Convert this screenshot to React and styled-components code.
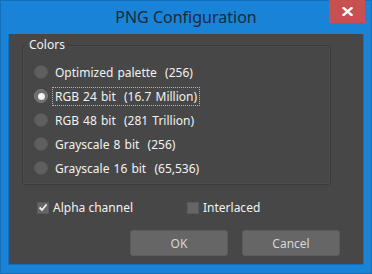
import React from "react";
import styled, { createGlobalStyle } from "styled-components";

const Global = createGlobalStyle`
  html, body { margin: 0; padding: 0; background: #1883d7; }
  body { font-family: "Noto Sans", "Open Sans", sans-serif; }
`;

const Window = styled.div`
  box-sizing: border-box;
  width: 372px;
  height: 274px;
  background: #1883d7;
  border: 1px solid #136fba;
  display: flex;
  flex-direction: column;
  padding: 0 7px 8px 7px;
`;

const TitleBar = styled.div`
  position: relative;
  height: 33px;
  display: flex;
  align-items: center;
  justify-content: center;
  flex-shrink: 0;
`;

const Title = styled.div`
  font-family: "Noto Sans", sans-serif;
  font-size: 16px;
  color: #1e2a36;
  margin-top: -1px;
`;

const CloseButton = styled.button`
  position: absolute;
  top: -1px;
  right: -1px;
  width: 36px;
  height: 23px;
  border: none;
  padding: 0;
  background: #c75050;
  display: flex;
  align-items: center;
  justify-content: center;
`;

const Content = styled.div`
  flex: 1;
  background: #474747;
  border: 1px solid #1670bf;
  border-top: none;
  display: flex;
  flex-direction: column;
  padding: 11px 0 0 0;
  color: #f2f2f2;
  font-size: 12px;
`;

const Group = styled.div`
  position: relative;
  margin: 0 32px 0 13px;
  border: 1px solid #3a3a3a;
  border-radius: 3px;
  box-shadow: inset 0 0 0 1px #4c4c4c;
  padding: 14px 0 4px 11px;
  display: flex;
  flex-direction: column;
`;

const Legend = styled.span`
  position: absolute;
  top: -9px;
  left: 3px;
  padding: 0 3px;
  background: #474747;
  line-height: 15px;
  color: #f2f2f2;
`;

const RadioRow = styled.div`
  height: 24px;
  display: flex;
  align-items: center;
`;

const RadioCircle = styled.span`
  box-sizing: border-box;
  width: 14px;
  height: 14px;
  border-radius: 50%;
  margin-right: 4px;
  flex-shrink: 0;
  background: ${(p) => (p.$checked ? "#6e6e6e" : "#5f5f5f")};
  border: 1px solid ${(p) => (p.$checked ? "#7a7a7a" : "#585858")};
  display: flex;
  align-items: center;
  justify-content: center;
  &::after {
    content: "";
    display: ${(p) => (p.$checked ? "block" : "none")};
    width: 7px;
    height: 7px;
    border-radius: 50%;
    background: radial-gradient(circle at 40% 40%, #ffffff, #dcdcdc);
  }
`;

const RadioLabel = styled.span`
  white-space: pre;
  word-spacing: 1px;
  line-height: 15px;
  padding: 1px 2px;
  border: 1px dotted ${(p) => (p.$focused ? "#b5b5b5" : "transparent")};
`;

const CheckRow = styled.div`
  display: grid;
  grid-template-columns: 150px auto;
  padding-left: 28px;
  margin-top: 15px;
  height: 13px;
  align-items: center;
`;

const CheckItem = styled.div`
  display: flex;
  align-items: center;
  gap: 4px;
  line-height: 15px;
`;

const CheckBox = styled.span`
  box-sizing: border-box;
  width: 12px;
  height: 12px;
  background: #666666;
  border: 1px solid #5a5a5a;
  display: flex;
  align-items: center;
  justify-content: center;
`;

const ButtonRow = styled.div`
  display: flex;
  justify-content: flex-end;
  gap: 14px;
  padding-right: 23px;
  margin-top: 17px;
`;

const Button = styled.button`
  box-sizing: border-box;
  width: 98px;
  height: 26px;
  border-radius: 3px;
  border: 1px solid #5c5c5c;
  background: #666666;
  color: #d6d6d6;
  font-family: "Noto Sans", sans-serif;
  font-size: 12px;
  padding: 0;
`;

const options = [
  "Optimized palette  (256)",
  "RGB 24 bit  (16.7 Million)",
  "RGB 48 bit  (281 Trillion)",
  "Grayscale 8 bit  (256)",
  "Grayscale 16 bit  (65,536)",
];

export default function App() {
  return (
    <>
      <Global />
      <Window>
        <TitleBar>
          <Title>PNG Configuration</Title>
          <CloseButton aria-label="Close">
            <svg width="11" height="9" viewBox="0 0 11 9">
              <path d="M1.5 1 L9.5 8 M9.5 1 L1.5 8" stroke="#fff" strokeWidth="2.4" strokeLinecap="square" />
            </svg>
          </CloseButton>
        </TitleBar>
        <Content>
          <Group>
            <Legend>Colors</Legend>
            {options.map((o, i) => (
              <RadioRow key={o}>
                <RadioCircle $checked={i === 1} />
                <RadioLabel $focused={i === 1}>{o}</RadioLabel>
              </RadioRow>
            ))}
          </Group>
          <CheckRow>
            <CheckItem>
              <CheckBox>
                <svg width="10" height="9" viewBox="0 0 10 9">
                  <path d="M1.5 4.5 L4 7 L8.5 1.5" stroke="#f0f0f0" strokeWidth="1.8" fill="none" />
                </svg>
              </CheckBox>
              Alpha channel
            </CheckItem>
            <CheckItem>
              <CheckBox />
              Interlaced
            </CheckItem>
          </CheckRow>
          <ButtonRow>
            <Button>OK</Button>
            <Button>Cancel</Button>
          </ButtonRow>
        </Content>
      </Window>
    </>
  );
}
